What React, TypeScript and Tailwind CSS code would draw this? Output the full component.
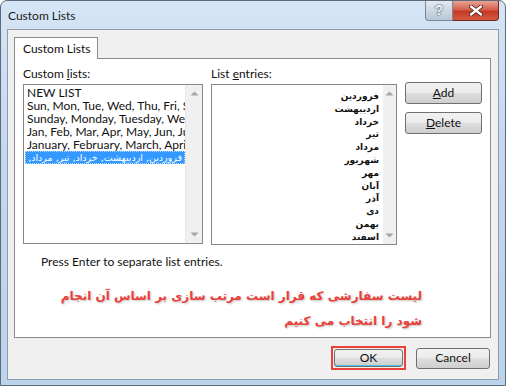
import React from "react";

const ui = { fontFamily: 'Lato, "Noto Sans", sans-serif' };
const fa = { fontFamily: '"DejaVu Sans", "Noto Sans", sans-serif' };

function Arrows() {
  return (
    <>
      <svg width="9" height="5" viewBox="0 0 9 5"><path d="M0.5 4.5 L4.5 0.5 L8.5 4.5 Z" fill="#a6a6a6" /></svg>
      <svg width="9" height="5" viewBox="0 0 9 5"><path d="M0.5 0.5 L4.5 4.5 L8.5 0.5 Z" fill="#a6a6a6" /></svg>
    </>
  );
}

function WinButton({ children, className = "" }: { children: React.ReactNode; className?: string }) {
  return (
    <div
      className={
        "flex items-center justify-center rounded-[3px] border border-[#707070] bg-[linear-gradient(#f2f2f2_0%,#ebebeb_48%,#dddddd_52%,#cfcfcf_100%)] text-[12px] text-[#111] " +
        className
      }
      style={ui}
    >
      {children}
    </div>
  );
}

export default function App() {
  const customLists = [
    "NEW LIST",
    "Sun, Mon, Tue, Wed, Thu, Fri, Sat",
    "Sunday, Monday, Tuesday, Wednesday, Thursday",
    "Jan, Feb, Mar, Apr, May, Jun, Jul, Aug",
    "January, February, March, April, May",
  ];
  const entries = ["فروردین", "اردیبهشت", "خرداد", "تیر", "مرداد", "شهریور", "مهر", "آبان", "آذر", "دی", "بهمن", "اسفند"];

  return (
    <div className="w-[506px] h-[386px] bg-white overflow-hidden">
      <div className="w-[506px] h-[386px] flex flex-col rounded-t-[7px] border border-[#5c6a7a] bg-[linear-gradient(180deg,#d6e5f5_0%,#c4d8ee_40%,#bcd3ec_100%)]">
        {/* Title bar */}
        <div className="h-[28px] flex items-start justify-between pl-[7px] pr-[6px]">
          <div className="pt-[6px] text-[12px] text-[#1b1b1b]" style={ui}>Custom Lists</div>
          <div className="flex">
            <div className="w-[28px] h-[20px] rounded-bl-[4px] border border-t-0 border-[#7b8795] bg-[linear-gradient(#e2eaf3_0%,#cdd8e4_50%,#b9c6d4_100%)] flex items-center justify-center">
              <span className="text-[14px] font-bold text-[#f7f9fb] [text-shadow:0_0_1px_#3b4a5a,0_0_2px_#3b4a5a]" style={{ fontFamily: '"Liberation Sans", sans-serif' }}>?</span>
            </div>
            <div className="w-[46px] h-[20px] rounded-br-[4px] border border-t-0 border-l-0 border-[#6b2b24] bg-[linear-gradient(#e8a497_0%,#d5604d_45%,#c43a26_55%,#d45a3e_100%)] flex items-center justify-center">
              <svg width="14" height="11" viewBox="0 0 14 11">
                <path d="M2 1.5 L12 9.5 M12 1.5 L2 9.5" stroke="#4a1a14" strokeWidth="4" strokeLinecap="round" />
                <path d="M2 1.5 L12 9.5 M12 1.5 L2 9.5" stroke="#ffffff" strokeWidth="2.4" strokeLinecap="round" />
              </svg>
            </div>
          </div>
        </div>

        {/* Client area */}
        <div className="flex-1 mx-[6px] mb-[5px] border border-[#8e9bab] bg-[#f0f0f0] flex flex-col">
          <div className="pt-[7px] px-[6px] flex flex-col">
            {/* Tab */}
            <div className="flex">
              <div className="w-[84px] h-[22px] -mb-px relative z-10 bg-white border border-b-0 border-[#898c95] flex items-center pl-[8px] text-[12px] text-[#111]" style={ui}>
                Custom Lists
              </div>
            </div>
            {/* Panel */}
            <div className="w-[477px] h-[280px] bg-white border border-[#898c95] flex flex-col overflow-hidden">
              <div className="flex pt-[6px] pl-[8px]">
                {/* Column 1 */}
                <div className="w-[180px] flex flex-col">
                  <div className="h-[17px] mb-[2px] text-[12px] text-[#111]" style={ui}>
                    Custom <span className="underline">l</span>ists:
                  </div>
                  <div className="h-[160px] border border-[#828790] flex">
                    <div className="flex-1 min-w-0 pt-[1px] pl-[1px] overflow-hidden">
                      {customLists.map((t) => (
                        <div key={t} className="h-[13px] leading-[13px] pl-[2px] whitespace-nowrap overflow-hidden text-[12px] text-[#111]" style={ui}>
                          {t}
                        </div>
                      ))}
                      <div dir="rtl" className="h-[13px] leading-[11px] bg-[#3399ff] text-white whitespace-nowrap overflow-hidden text-[9.5px] pr-[2px] border border-dotted border-[#b5d7ff]" style={fa}>
                        فروردین, اردیبهشت, خرداد, تیر, مرداد, شهریور, مهر
                      </div>
                    </div>
                    <div className="w-[17px] h-full bg-[#f0f0f0] border-l border-[#e6e6e6] flex flex-col items-center justify-between py-[6px]">
                      <Arrows />
                    </div>
                  </div>
                </div>
                {/* Column 2 */}
                <div className="w-[186px] ml-[8px] flex flex-col">
                  <div className="h-[17px] mb-[2px] text-[12px] text-[#111]" style={ui}>
                    List <span className="underline">e</span>ntries:
                  </div>
                  <div className="h-[161px] border border-[#828790] flex">
                    <div dir="rtl" className="flex-1 pr-[4px] pt-[5px] overflow-hidden">
                      {entries.map((t) => (
                        <div key={t} className="h-[12.8px] leading-[12.8px] text-[9px] font-bold text-[#111] whitespace-nowrap" style={fa}>
                          {t}
                        </div>
                      ))}
                    </div>
                    <div className="w-[13px] h-full bg-[#f0f0f0] flex flex-col items-center justify-between py-[6px]">
                      <Arrows />
                    </div>
                  </div>
                </div>
                {/* Column 3 */}
                <div className="ml-[8px] pt-[17px] flex flex-col gap-[8px]">
                  <WinButton className="w-[77px] h-[22px]">
                    <span><span className="underline">A</span>dd</span>
                  </WinButton>
                  <WinButton className="w-[77px] h-[22px]">
                    <span><span className="underline">D</span>elete</span>
                  </WinButton>
                </div>
              </div>
              <div className="pl-[26px] pt-[8px] text-[12px] text-[#111]" style={ui}>
                Press Enter to separate list entries.
              </div>
              <div dir="rtl" className="pr-[68px] pt-[16px] flex flex-col items-start gap-[6px]">
                <div className="whitespace-nowrap text-[12px] leading-[19px] font-bold text-[#e8413a] [text-shadow:1px_1px_2px_rgba(120,120,120,0.45)]" style={fa}>
                  لیست سفارشی که قرار است مرتب سازی بر اساس آن انجام
                </div>
                <div className="whitespace-nowrap text-[12px] leading-[19px] font-bold text-[#e8413a] [text-shadow:1px_1px_2px_rgba(120,120,120,0.45)]" style={fa}>
                  شود را انتخاب می کنیم
                </div>
              </div>
            </div>
          </div>
          {/* Bottom buttons */}
          <div className="flex justify-end items-center pr-[8px] pt-[8px] gap-[10px]">
            <div className="w-[75px] h-[24px] border-[2px] border-[#e8413a] flex items-center justify-center">
              <WinButton className="w-[69px] h-[18px] border-[#3c7fb1] shadow-[inset_0_-1px_0_#4cc1f4]">OK</WinButton>
            </div>
            <WinButton className="w-[74px] h-[21px]">Cancel</WinButton>
          </div>
        </div>
      </div>
    </div>
  );
}
